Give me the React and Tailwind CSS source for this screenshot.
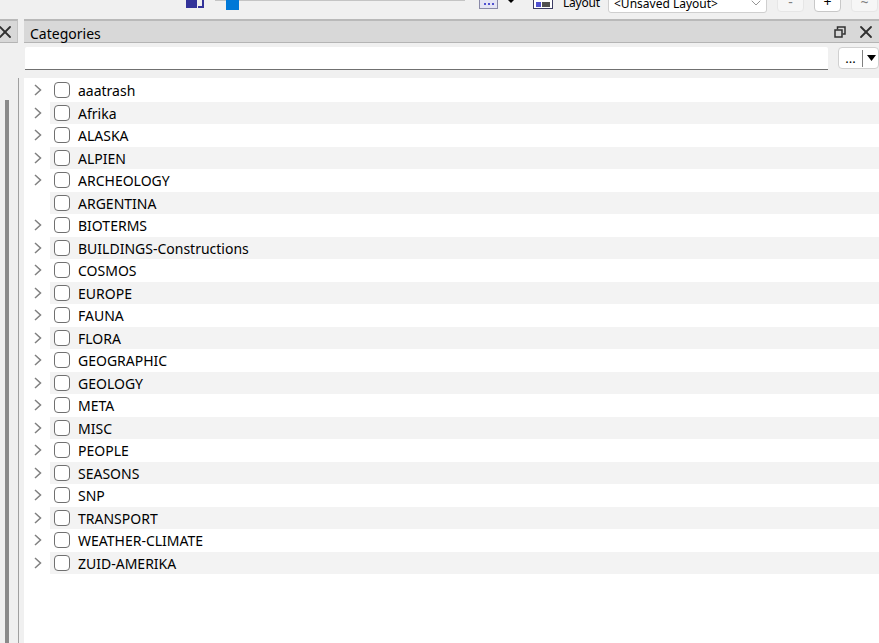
import React from 'react';
import { ChevronDown, X } from 'lucide-react';

const categories = [
  { name: 'aaatrash' },
  { name: 'Afrika' },
  { name: 'ALASKA' },
  { name: 'ALPIEN' },
  { name: 'ARCHEOLOGY' },
  { name: 'ARGENTINA', leaf: true },
  { name: 'BIOTERMS' },
  { name: 'BUILDINGS-Constructions' },
  { name: 'COSMOS' },
  { name: 'EUROPE' },
  { name: 'FAUNA' },
  { name: 'FLORA' },
  { name: 'GEOGRAPHIC' },
  { name: 'GEOLOGY' },
  { name: 'META' },
  { name: 'MISC' },
  { name: 'PEOPLE' },
  { name: 'SEASONS' },
  { name: 'SNP' },
  { name: 'TRANSPORT' },
  { name: 'WEATHER-CLIMATE' },
  { name: 'ZUID-AMERIKA' },
];

function CategoryRow({ name, leaf, odd }) {
  return (
    <div className="flex h-[22.5px] items-center">
      <div className="flex w-[26px] shrink-0 justify-center pl-[2px]">
        {!leaf && (
          <svg className="h-[12px] w-[8px] text-[#808080]" viewBox="0 0 8 12" fill="none" stroke="currentColor" strokeWidth="1.5">
            <path d="M1 1l5.5 5L1 11" />
          </svg>
        )}
      </div>
      <div className={`flex h-full flex-1 items-center pl-[4px] ${odd ? 'bg-[#f3f3f3]' : 'bg-white'}`}>
        <span className="h-[16px] w-[16px] shrink-0 rounded-[4px] border border-[#707070] bg-white" />
        <span className="ml-[8px] pt-[2px] text-[14px] leading-none text-black">{name}</span>
      </div>
    </div>
  );
}

function ToolbarButton({ label, muted }) {
  return (
    <div className={`flex h-[32px] w-[27px] shrink-0 items-center justify-center rounded-[4px] border pt-[12px] text-[14px] leading-none ${muted ? 'border-[#e6e6e6] bg-[#f6f6f6] text-[#808080]' : 'border-[#c8c8c8] bg-white text-black'}`}>
      {label}
    </div>
  );
}

function Toolbar() {
  return (
    <div className="flex h-[19px] shrink-0 items-start overflow-hidden text-[14px] text-black">
      <div className="ml-[186px] flex h-[8px] shrink-0 items-end gap-[1px]">
        <span className="h-[8px] w-[11px] bg-[#333399]" />
        <span className="h-[8px] w-[6px] border-r-2 border-b-2 border-[#333399]" />
      </div>
      <div className="relative ml-[11px] h-[13px] w-[250px] shrink-0">
        <div className="h-[1px] w-full bg-[#c4c4c4]" />
        <div className="absolute top-0 left-[11px] h-[10px] w-[13px] bg-[#0078d7]" />
      </div>
      <div className="ml-[14px] flex h-[9px] w-[19px] shrink-0 items-center justify-center gap-[2px] border-x border-b border-[#8a8aa8] bg-[#e4e4f4]">
        <span className="h-[2px] w-[2px] bg-[#5050d0]" />
        <span className="h-[2px] w-[2px] bg-[#5050d0]" />
        <span className="h-[2px] w-[2px] bg-[#5050d0]" />
      </div>
      <svg className="ml-[10px] h-[3px] w-[6px] shrink-0" viewBox="0 0 6 3">
        <path d="M0 0h6L3 3z" fill="#000" />
      </svg>
      <div className="ml-[19px] flex h-[9px] w-[20px] shrink-0 items-center gap-[1px] border-x border-b border-[#3c3c64] bg-white px-[2px]">
        <span className="h-[5px] w-[5px] bg-[#5050d0]" />
        <span className="h-[5px] w-[8px] bg-[#505050]" />
      </div>
      <div className="ml-[10px] mt-[-4px] w-[37px] shrink-0 text-[12px] leading-[14px] tracking-[-0.2px]">Layout</div>
      <div className="ml-[8px] mt-[-19px] flex h-[32px] w-[159px] shrink-0 items-center justify-between rounded-[3px] border border-[#cfcfcf] bg-white pl-[5px] pr-[2px]">
        <span className="pt-[13px] text-[12px] leading-none">&lt;Unsaved Layout&gt;</span>
        <ChevronDown className="mt-[12px] h-[16px] w-[16px] text-[#606060]" strokeWidth={1} />
      </div>
      <div className="ml-[10px] mt-[-20px] flex shrink-0 gap-[10px]">
        <ToolbarButton label="-" muted />
        <ToolbarButton label="+" />
        <ToolbarButton label="~" muted />
      </div>
    </div>
  );
}

function LeftPane() {
  return (
    <div className="flex w-[24px] shrink-0 flex-col">
      <div className="flex h-[24px] w-[18px] shrink-0 items-center overflow-hidden border-t-2 border-b border-r border-t-[#b9b9b9] border-b-[#b4b4b4] border-r-[#c4c4c4] bg-[#d8d8d8] pt-[1px]">
        <X className="ml-[-5px] h-[20px] w-[20px] shrink-0 text-[#303030]" strokeWidth={2.2} />
      </div>
      <div className="h-[35px] shrink-0" />
      <div className="flex w-[19px] flex-1 border-r border-[#a0a0a0] pl-[5px] pt-[22px]">
        <div className="h-full w-[4px] bg-[#8a8a8a]" />
      </div>
    </div>
  );
}

export default function App() {
  return (
    <div className="flex h-[643px] w-[879px] flex-col overflow-hidden bg-[#f0f0f0] font-['Noto_Sans','Open_Sans',sans-serif]">
      <Toolbar />
      <div className="flex min-h-0 flex-1">
        <LeftPane />
        <div className="flex min-w-0 flex-1 flex-col">
          <div className="flex h-[24px] shrink-0 items-center border-t-2 border-b border-t-[#b9b9b9] border-b-[#b4b4b4] bg-[#d8d8d8] pl-[6px] pr-[3px]">
            <span className="pt-[5px] text-[14px] leading-none text-black">Categories</span>
            <svg className="ml-auto h-[12px] w-[12px] text-[#303030]" viewBox="0 0 12 12" fill="none" stroke="currentColor" strokeWidth="1.5">
              <rect x="1" y="4" width="7" height="7" />
              <path d="M3.5 3.5V1H11v7H8.5" />
            </svg>
            <X className="ml-[10px] h-[20px] w-[20px] text-[#303030]" strokeWidth={2.2} />
          </div>
          <div className="flex h-[35px] shrink-0 items-start gap-[10px] pl-[1px] pt-[4px]">
            <div className="h-[23px] w-[803px] shrink-0 rounded-t-[2px] border-b border-[#707070] bg-white" />
            <div className="flex h-[22px] w-[41px] shrink-0 items-center rounded-[4px] border border-[#d0d0d0] bg-white">
              <span className="w-[23px] text-center text-[13px] leading-none text-black">...</span>
              <span className="h-[17px] w-[1px] bg-[#808080]" />
              <svg className="ml-[4px] h-[6px] w-[9px]" viewBox="0 0 9 6">
                <path d="M0 0h9L4.5 6z" fill="#000" />
              </svg>
            </div>
          </div>
          <div className="min-h-0 flex-1 bg-white pt-[1px]">
            {categories.map((cat, i) => (
              <CategoryRow key={cat.name} name={cat.name} leaf={cat.leaf} odd={i % 2 === 1} />
            ))}
          </div>
        </div>
      </div>
    </div>
  );
}
